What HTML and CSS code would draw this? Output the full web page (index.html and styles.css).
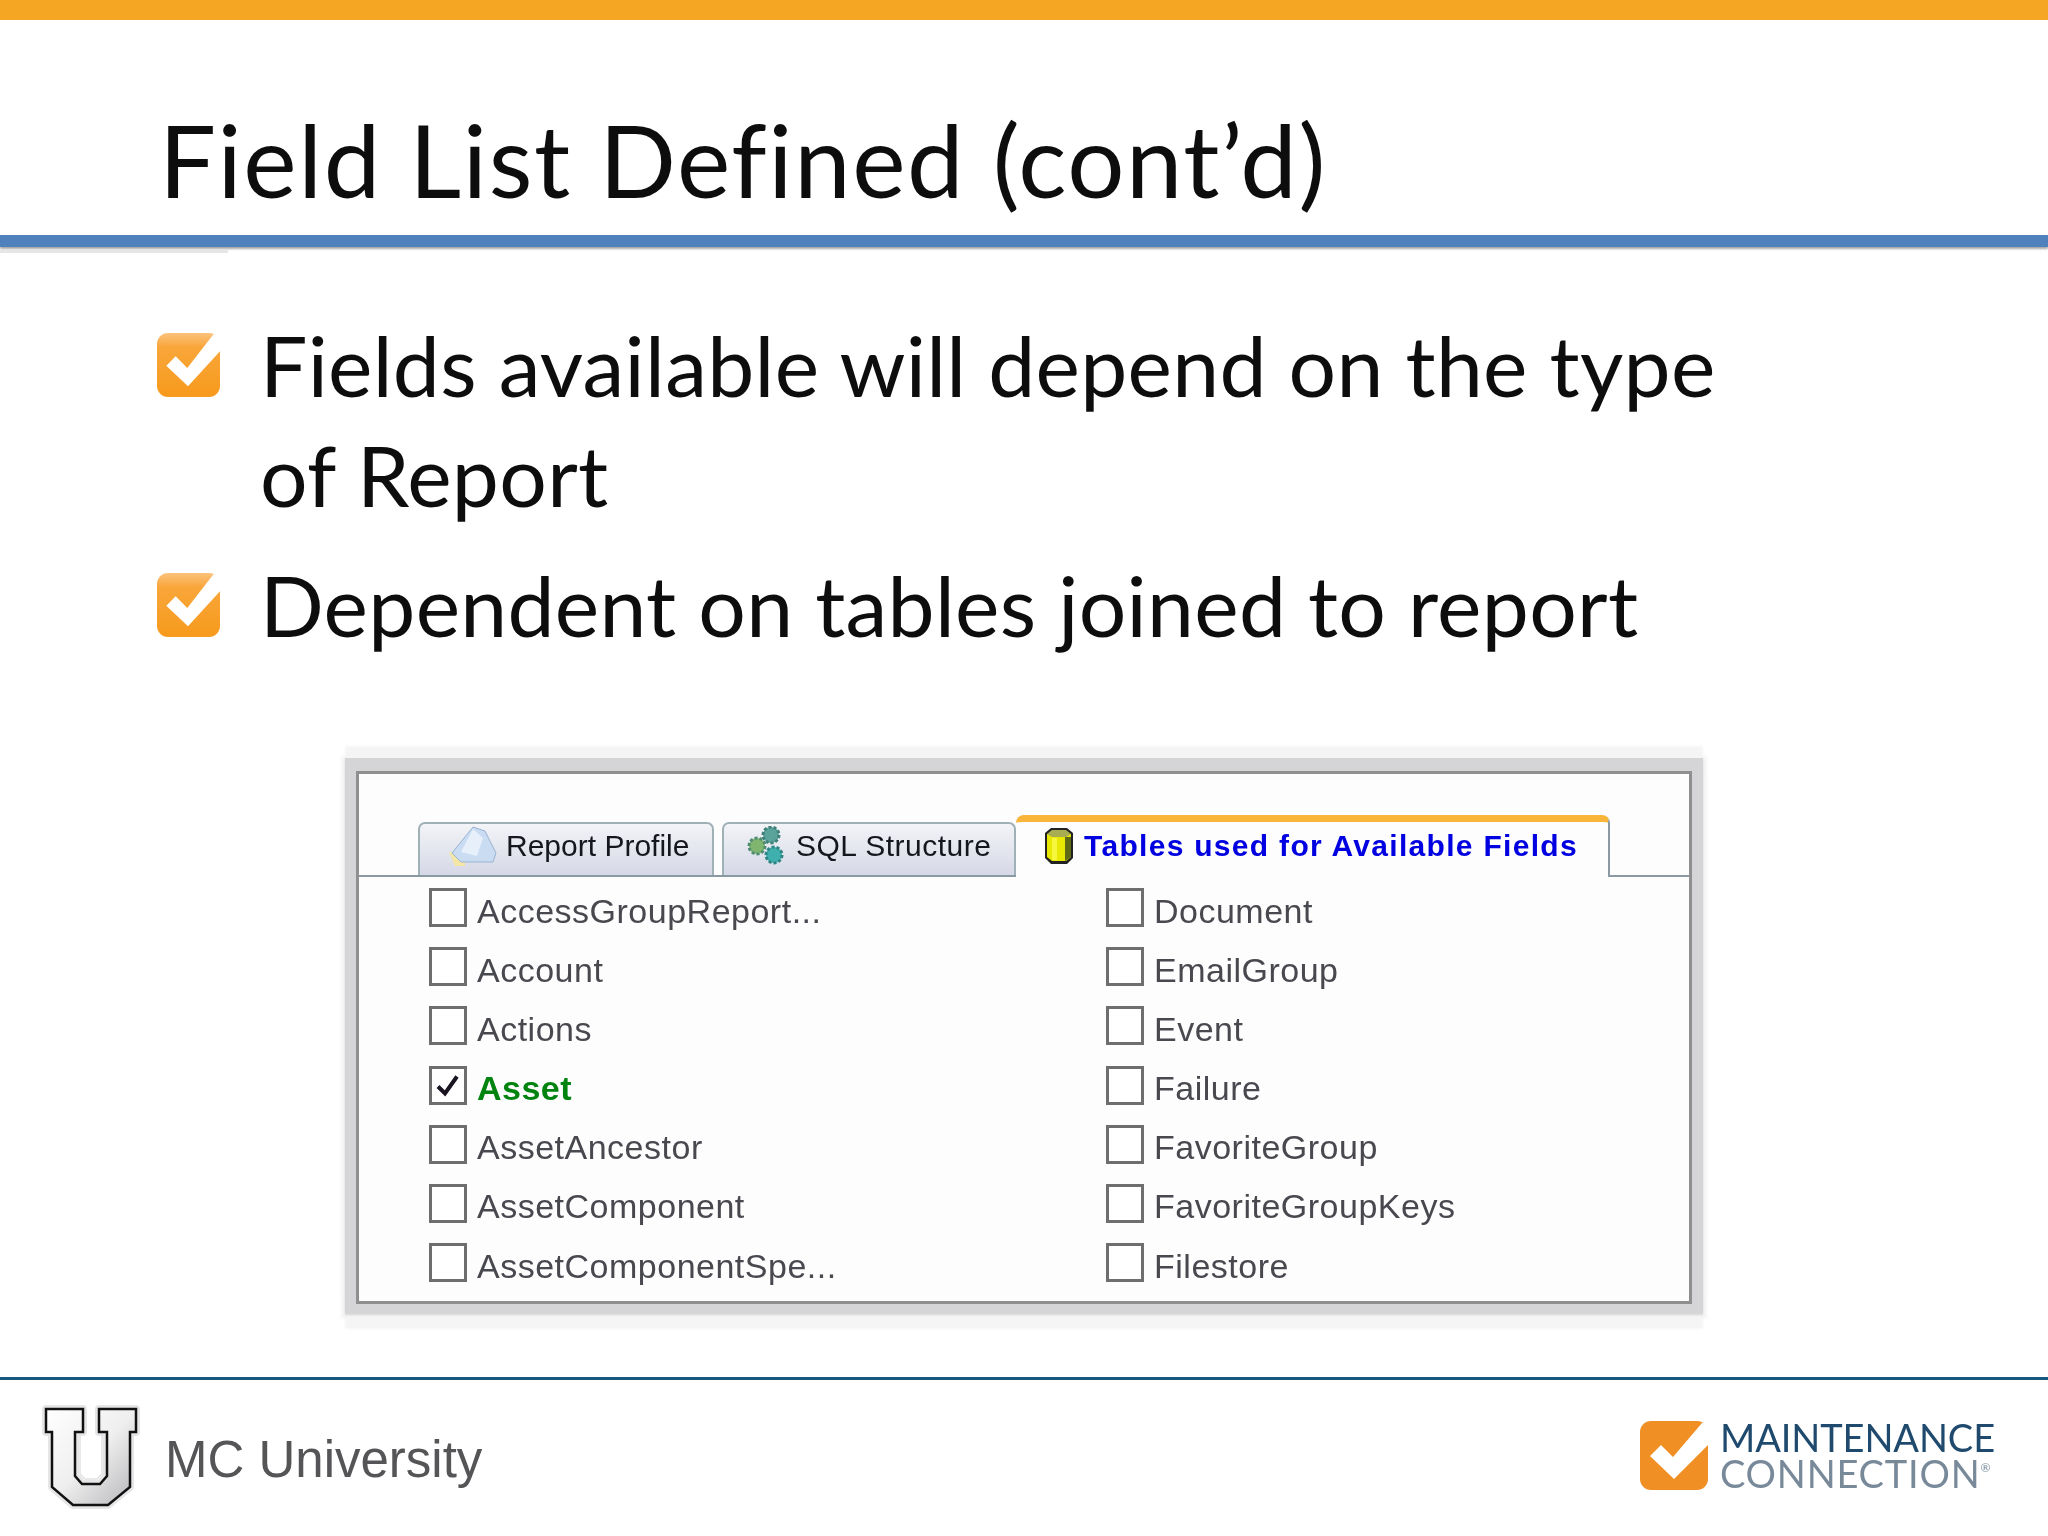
FILE: index.html
```html
<!DOCTYPE html>
<html lang="en">
<head>
<meta charset="utf-8">
<title>Field List Defined (cont’d)</title>
<link rel="stylesheet" href="styles.css">
</head>
<body>
<main class="slide">
  <div class="topbar"></div>
  <header class="head"><h1 class="title">Field List Defined (cont’d)</h1></header>
  <div class="rule"></div>
  <div class="rule-shade"></div>
  <ul class="bullets">
    <li class="bullet">
      <svg class="tick" viewBox="0 0 63 64"><defs><linearGradient id="gl" x1="0" y1="0" x2="0" y2="1"><stop offset="0" stop-color="#fbc27c"/><stop offset=".22" stop-color="#f9a63a"/><stop offset="1" stop-color="#f79a1c"/></linearGradient></defs><rect width="63" height="64" rx="11" fill="url(#gl)"/><path d="M9.3 32.700L18.700 23.300L30.300 35L56.700 1L63 2V18.300L31 53.300Z" fill="#fff"/></svg>
      <p class="bullet-text">Fields available will depend on the type<br>of Report</p>
    </li>
    <li class="bullet">
      <svg class="tick" viewBox="0 0 63 64"><rect width="63" height="64" rx="11" fill="url(#gl)"/><path d="M9.3 32.700L18.700 23.300L30.300 35L56.700 1L63 2V18.300L31 53.300Z" fill="#fff"/></svg>
      <p class="bullet-text">Dependent on tables joined to report</p>
    </li>
  </ul>
  <section class="panel">
    <div class="tabs">
      <div class="tab tab-a">
        <svg class="ico ico-a" viewBox="0 0 48 40"><path d="M0 26L16 28V40H6Z" fill="#f3e6a6"/><path d="M24 1L36 5L47 27L44 36L12 36L3 27Z" fill="#c9dcf2" stroke="#9ab4d2"/><path d="M24 3L34 12L28 30L12 26Z" fill="#e7f0fa"/></svg>
        <span>Report Profile</span>
      </div>
      <div class="tab tab-b">
        <svg class="ico ico-b" viewBox="0 0 40 40"><circle cx="24" cy="9" r="8" fill="#5aa39b" stroke="#3f8079" stroke-width="3" stroke-dasharray="3 2"/><circle cx="10" cy="20" r="8" fill="#7fb56f" stroke="#4f8c74" stroke-width="3" stroke-dasharray="3 2"/><circle cx="27" cy="29" r="8" fill="#3fb0ae" stroke="#2f8583" stroke-width="3" stroke-dasharray="3 2"/></svg>
        <span>SQL Structure</span>
      </div>
      <div class="tab tab-on">
        <svg class="ico ico-c" viewBox="0 0 32 38"><path d="M2 6L8 1H24L30 6V31L24 37H8L2 31Z" fill="#222"/><path d="M4 7H28V30L23 34H9L4 30Z" fill="#e8e800"/><path d="M4 7L9 3H23L28 7L23 10H9Z" fill="#a9ad52"/><path d="M9 11H14V33H9Z" fill="#f6f63c"/><path d="M22 10H28V30L22 34Z" fill="#5e6a16"/></svg>
        <span>Tables used for Available Fields</span>
      </div>
    </div>
    <div class="fields">
      <label class="field"><i class="box"></i><span>AccessGroupReport...</span></label>
      <label class="field"><i class="box"></i><span>Document</span></label>
      <label class="field"><i class="box"></i><span>Account</span></label>
      <label class="field"><i class="box"></i><span>EmailGroup</span></label>
      <label class="field"><i class="box"></i><span>Actions</span></label>
      <label class="field"><i class="box"></i><span>Event</span></label>
      <label class="field on"><i class="box"><svg class="mark" viewBox="0 0 32 32"><path d="M6 17L13 24L25 7" fill="none" stroke="#1a1420" stroke-width="4"/></svg></i><span>Asset</span></label>
      <label class="field"><i class="box"></i><span>Failure</span></label>
      <label class="field"><i class="box"></i><span>AssetAncestor</span></label>
      <label class="field"><i class="box"></i><span>FavoriteGroup</span></label>
      <label class="field"><i class="box"></i><span>AssetComponent</span></label>
      <label class="field"><i class="box"></i><span>FavoriteGroupKeys</span></label>
      <label class="field"><i class="box"></i><span>AssetComponentSpe...</span></label>
      <label class="field"><i class="box"></i><span>Filestore</span></label>
    </div>
  </section>
  <footer class="foot">
    <div class="brand">
      <svg class="ulogo" viewBox="40 44 102 108"><defs><linearGradient id="ug" x1="0" y1="0" x2="1" y2="1"><stop offset="0" stop-color="#fff"/><stop offset=".5" stop-color="#efeff0"/><stop offset="1" stop-color="#b5b5b7"/></linearGradient></defs><path d="M46 49H83V72H75V116L82 124H100L107 116V72H99V49H136V72H130V127L108 145H73L52 127V72H46Z" fill="url(#ug)" stroke="#e6e6e8" stroke-width="8" stroke-linejoin="round"/><path d="M46 49H83V72H75V116L82 124H100L107 116V72H99V49H136V72H130V127L108 145H73L52 127V72H46Z" fill="url(#ug)" stroke="#111" stroke-width="2.500"/><path d="M80 74V114L85 119H97L102 114V74" fill="none" stroke="#e2e2e4" stroke-width="1.500"/></svg>
      <span class="brand-name">MC University</span>
    </div>
    <div class="mc">
      <svg class="mc-mark" viewBox="0 0 68 69"><rect width="68" height="69" rx="11" fill="#f08f24"/><path d="M10 35L21 24L33 36L62 2L68 1V24L34 58Z" fill="#fff"/></svg>
      <div class="mc-words"><span class="mc-top">MAINTENANCE</span><span class="mc-bot">CONNECTION<sup class="reg">®</sup></span></div>
    </div>
  </footer>
</main>
</body>
</html>
```
FILE: styles.css
```css
* { box-sizing: border-box; }
html, body { margin: 0; padding: 0; background: #fff; }
.slide {
  width: 2048px;
  height: 1536px;
  display: flex;
  flex-direction: column;
  overflow: hidden;
  background: #fff;
  color: #0d0d0d;
  font-family: "Lato", "Liberation Sans", sans-serif;
}
.topbar { height: 20px; flex: none; background: #f5a623; }
.head { height: 215px; flex: none; padding-left: 159px; display: flex; align-items: flex-end; }
.title { margin: 0 0 16px; font-size: 101px; line-height: 120px; font-weight: 400; letter-spacing: 1.6px; white-space: nowrap; }
.rule {
  height: 12px;
  flex: none;
  background: #4f81bd;
  box-shadow: 0 2px 2px #a8a8a8;
}
.rule-shade { width: 228px; height: 3px; margin-top: 3px; flex: none; background: #e6e6e6; }
.bullets { list-style: none; margin: 0; padding: 80px 0 0 157px; height: 490px; flex: none; display: flex; flex-direction: column; gap: 43px; }
.bullet { display: flex; align-items: flex-start; gap: 40px; }
.tick { width: 63px; height: 64px; flex: none; margin-top: 0; }
.bullet-text { margin: -23px 0 0; font-size: 84px; line-height: 110px; letter-spacing: .3px; white-space: nowrap; }
.panel {
  width: 1336px;
  height: 533px;
  flex: none;
  margin-left: 356px;
  margin-top: 28px;
  border: 3px solid #8f8f8f;
  background: #fdfdfe;
  box-shadow: 0 0 2px 11px #d5d5d7, 0 -2px 0 11px #d5d5d7, 0 -14px 3px 11px #f5f5f6, 0 14px 3px 11px #f5f5f6, 0 0 3px 15px #f5f5f6;
  font-family: "Liberation Sans", Arial, sans-serif;
  filter: blur(.6px);
}
.tabs { height: 103px; display: flex; align-items: flex-end; padding: 0 0 0 59px; border-bottom: 2px solid #8b9aa2; }
.tab {
  height: 53px;
  padding-bottom: 8px;
  display: flex;
  align-items: center;
  font-size: 30px;
  color: #16161e;
  background: linear-gradient(#f3f4f7, #d5d8e6);
  border: 2px solid #9fb0b6;
  border-bottom: 0;
  border-radius: 7px 7px 0 0;
  white-space: nowrap;
}
.tab-a { width: 296px; margin-right: 8px; padding-left: 29px; }
.tab-b { width: 294px; padding-left: 23px; }
.tab-b span { letter-spacing: .5px; }
.tab-on {
  width: 594px;
  height: 62px;
  margin-bottom: -2px;
  padding-left: 27px;
  background: #fdfdfe;
  border: 0;
  border-top: 7px solid #f9b53a;
  border-right: 2px solid #8b9aa2;
  color: #0000e0;
  font-weight: 700;
  letter-spacing: 1.3px;
  border-radius: 8px 8px 0 0;
}
.ico { flex: none; margin-right: 9px; }
.ico-a { width: 48px; height: 40px; }
.ico-b { width: 40px; height: 40px; }
.ico-c { width: 32px; height: 38px; }
.fields { display: grid; grid-template-columns: 677px 1fr; grid-auto-rows: 59.2px; padding: 11px 0 0 70px; }
.field { display: flex; align-items: flex-start; gap: 10px; font-size: 34px; line-height: 40px; color: #48484f; letter-spacing: .5px; white-space: nowrap; }
.field span { margin-top: 2.5px; }
.box { width: 38px; height: 39px; flex: none; border: 3px solid #6e6e6e; background: #fff; display: block; }
.mark { display: block; width: 100%; height: 100%; }
.on { color: #00840f; font-weight: 700; }
.foot {
  margin-top: auto;
  height: 159px;
  flex: none;
  border-top: 3px solid #17587f;
  display: flex;
  justify-content: space-between;
  align-items: center;
  padding: 0 53px 0 40px;
}
.brand { display: flex; align-items: center; gap: 23px; }
.ulogo { width: 102px; height: 108px; flex: none; }
.brand-name { font-family: "Liberation Sans", Arial, sans-serif; font-size: 51px; color: #555558; margin-top: 2px; }
.mc { display: flex; align-items: center; gap: 12px; margin-top: -6px; }
.mc-mark { width: 68px; height: 69px; flex: none; }
.mc-words { display: flex; flex-direction: column; gap: 0; font-family: "Lato", sans-serif; font-size: 38px; line-height: 36px; filter: blur(.4px); }
.mc-top { color: #1f4a6e; letter-spacing: -.1px; }
.mc-bot { color: #78899a; letter-spacing: .8px; }
.reg { font-size: 12px; line-height: 0; vertical-align: 16px; }
```
